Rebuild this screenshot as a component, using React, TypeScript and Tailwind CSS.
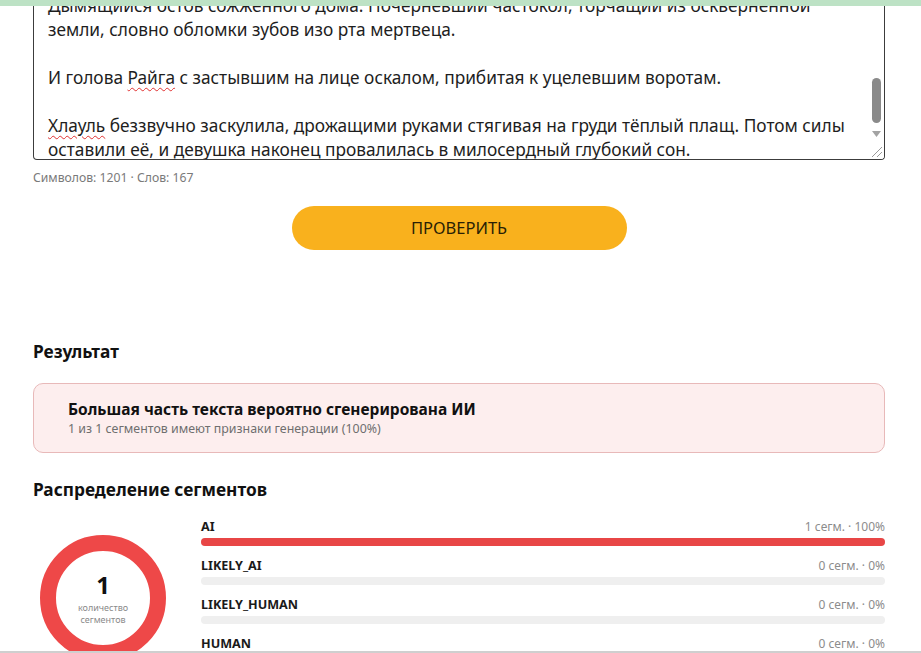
import React from "react";

interface Segment {
  label: string;
  count: number;
  percent: number;
}

const segments: Segment[] = [
  { label: "AI", count: 1, percent: 100 },
  { label: "LIKELY_AI", count: 0, percent: 0 },
  { label: "LIKELY_HUMAN", count: 0, percent: 0 },
  { label: "HUMAN", count: 0, percent: 0 },
];

const lines = [
  "Дымящийся остов сожженного дома. Почерневший частокол, торчащий из оскверненной",
  "земли, словно обломки зубов изо рта мертвеца.",
  "",
  "И голова @Райга@ с застывшим на лице оскалом, прибитая к уцелевшим воротам.",
  "",
  "@Хлауль@ беззвучно заскулила, дрожащими руками стягивая на груди тёплый плащ. Потом силы",
  "оставили её, и девушка наконец провалилась в милосердный глубокий сон.",
];

// words wrapped in @ get the spellcheck squiggle
function Line({ text }: { text: string }) {
  if (!text) return <div className="h-[24px]" />;
  const parts = text.split("@");
  return (
    <div className="h-[24px] whitespace-nowrap">
      {parts.map((p, i) =>
        i % 2 === 1 ? (
          <span
            key={i}
            className="underline decoration-wavy decoration-[#e03131] decoration-1 underline-offset-[3px]"
          >
            {p}
          </span>
        ) : (
          <span key={i}>{p}</span>
        )
      )}
    </div>
  );
}

function TextBox() {
  return (
    <div className="relative h-[160px] overflow-hidden rounded-b-[4px] border-x border-b border-[#3c3c3c] bg-white">
      <div className="-mt-[6px] pl-[14px] text-[17.3px] leading-[24px] text-[#1e1e1e]">
        {lines.map((l, i) => (
          <Line key={i} text={l} />
        ))}
      </div>
      {/* native-looking scrollbar */}
      <div className="absolute right-0 top-0 bottom-0 w-[17px] bg-white">
        <div className="absolute left-[5px] top-[78px] h-[45px] w-[9px] rounded-full bg-[#8a8a8a]" />
        <svg className="absolute left-[5px] top-[131px]" width="9" height="6" viewBox="0 0 9 6">
          <path d="M0 0h9L4.5 6z" fill="#a3a3a3" />
        </svg>
        <svg className="absolute left-[3px] top-[145px]" width="13" height="13" viewBox="0 0 13 13">
          <path d="M12 2L2 12M12 7L7 12" stroke="#9a9a9a" strokeWidth="1" />
        </svg>
      </div>
    </div>
  );
}

function Donut() {
  return (
    <div className="relative h-[126px] w-[126px] shrink-0">
      <svg width="126" height="126" viewBox="0 0 126 126" className="absolute inset-0">
        <circle cx="63" cy="63" r="55" fill="none" stroke="#ee4848" strokeWidth="16" />
      </svg>
      <div className="absolute inset-0 flex flex-col items-center justify-center">
        <div className="text-[24px] font-bold leading-[28px] text-[#111]">1</div>
        <div className="mt-[3px] text-center text-[9px] leading-[12px] text-[#8a8a8a]">
          количество
          <br />
          сегментов
        </div>
      </div>
    </div>
  );
}

function SegmentRow({ s }: { s: Segment }) {
  return (
    <div>
      <div className="flex h-[18px] items-center justify-between">
        <span className="text-[12.6px] font-bold text-[#1a1a1a]">{s.label}</span>
        <span className="text-[12px] text-[#8c8c8c]">
          {s.count} сегм. · {s.percent}%
        </span>
      </div>
      <div className="mt-[2px] h-[8px] w-full rounded-full bg-[#efefef]">
        <div className="h-full rounded-full bg-[#e84646]" style={{ width: `${s.percent}%` }} />
      </div>
    </div>
  );
}

export default function App() {
  return (
    <div className="relative h-[653px] overflow-hidden bg-white font-['Noto_Sans',sans-serif]">
      <div className="absolute inset-x-0 top-0 z-10 h-[6px] bg-[#bde2c5]" />

      <div className="ml-[33px] w-[852px]">
        <TextBox />
        <div className="mt-[10px] text-[12.2px] leading-[16px] text-[#7a7a7a]">
          Символов: 1201 · Слов: 167
        </div>

        <div className="mt-[20px] flex justify-center">
          <button className="h-[44px] w-[335px] rounded-full bg-[#f9b11d] text-[16.5px] text-[#2a1f05]">
            ПРОВЕРИТЬ
          </button>
        </div>

        <h2 className="mt-[90px] text-[17.3px] font-bold leading-[24px] text-[#111]">Результат</h2>

        <div className="mt-[19px] flex h-[70px] flex-col justify-center rounded-[10px] border border-[#e8b9b9] bg-[#fdeeee] pl-[34px]">
          <div className="text-[15.5px] font-bold leading-[20px] text-[#111]">
            Большая часть текста вероятно сгенерирована ИИ
          </div>
          <div className="mt-[2px] text-[12.4px] leading-[16px] text-[#6f6f6f]">
            1 из 1 сегментов имеют признаки генерации (100%)
          </div>
        </div>

        <h2 className="mt-[25px] text-[17.3px] font-bold leading-[24px] text-[#111]">
          Распределение сегментов
        </h2>

        <div className="mt-[16px] flex items-start">
          <div className="ml-[7px] mt-[17px]">
            <Donut />
          </div>
          <div className="ml-[35px] flex flex-1 flex-col gap-[11px]">
            {segments.map((s) => (
              <SegmentRow key={s.label} s={s} />
            ))}
          </div>
        </div>
      </div>

      <div className="absolute inset-x-0 bottom-0 h-[2px] bg-[#cfcfcf]" />
    </div>
  );
}
